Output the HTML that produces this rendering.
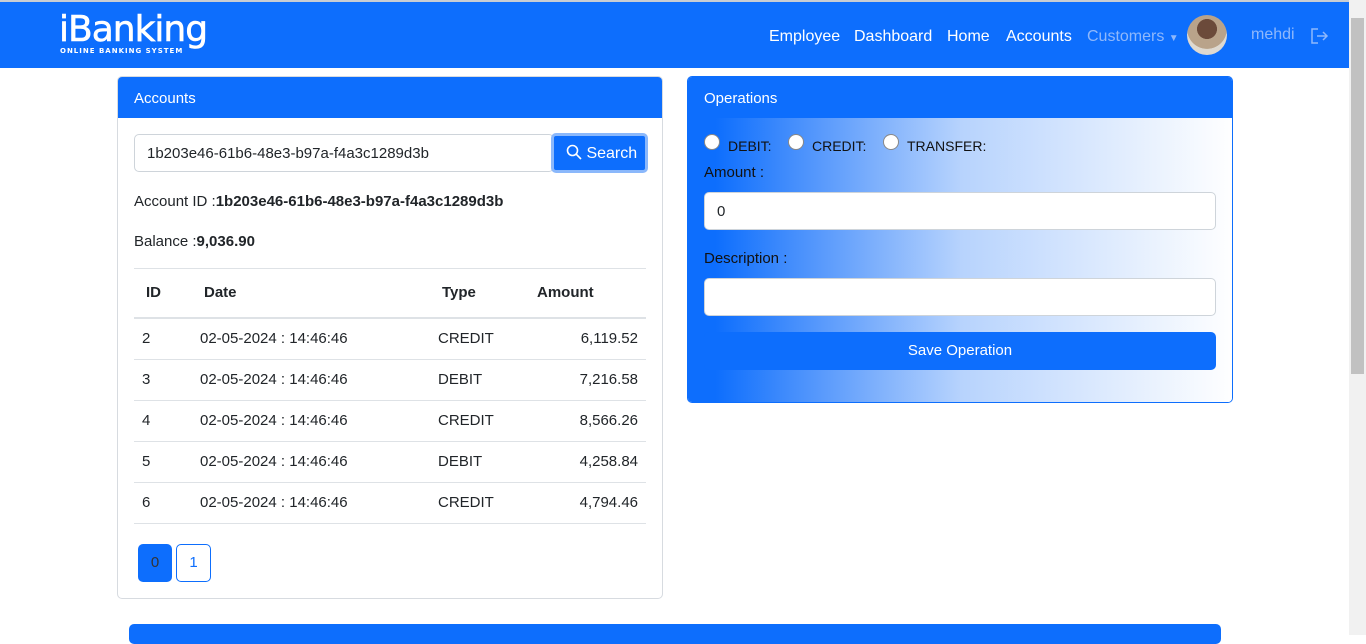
<!DOCTYPE html>
<html><head><style>
*{box-sizing:border-box;margin:0;padding:0}
body{width:1366px;height:635px;overflow:hidden;font-family:"Liberation Sans",sans-serif;font-size:15px;color:#212529;background:#fff;position:relative}
.top{position:absolute;left:0;top:0;width:1349px;height:2px;background:#c8cdd3}
nav{position:absolute;left:0;top:2px;width:1349px;height:66px;background:#0d6efd}
.logo{position:absolute;left:59px;top:10px;color:#fff;font-size:36px;font-family:"DejaVu Sans",sans-serif;letter-spacing:-1px;line-height:36px;-webkit-text-stroke:0.6px #fff}
.logo small{position:absolute;left:1px;top:35px;font-size:7px;font-weight:bold;letter-spacing:1px;white-space:nowrap;line-height:9px;-webkit-text-stroke:0}
.nl{position:absolute;top:26px;color:#fff;font-size:16px}
.sb{position:absolute;right:0;top:0;width:17px;height:635px;background:#f1f1f1}
.sb div{position:absolute;left:2px;top:18px;width:13px;height:356px;background:#c1c1c1}
.card{position:absolute;border:1px solid #d7dbe0;border-radius:5px;overflow:hidden}
.ch{background:#0d6efd;color:#fff;height:41px;padding:13px 16px 0;font-size:15px}
input.f{position:absolute;border:1px solid #ced4da;border-radius:5px;background:#fff;height:38px;padding:0 12px;font-size:15px;font-family:inherit;color:#212529}
table{position:absolute;left:16px;top:191px;width:512px;border-collapse:collapse}
td,th{height:41px;text-align:left;padding:0 8px;border-bottom:1px solid #dee2e6;font-size:15px}
th{font-weight:bold;border-bottom:2px solid #dee2e6;height:50px;padding-left:12px}
td.r{text-align:right}
.rd{position:absolute;top:134px;width:16px;height:16px;border-radius:50%;background:#fff;border:1px solid #888}
.rl{position:absolute;top:138px;color:#111;font-size:14px}
</style></head><body>
<div class="top"></div>
<nav>
<div class="logo">iBanking<small>ONLINE BANKING SYSTEM</small></div>
<span class="nl" style="left:769px">Employee</span>
<span class="nl" style="left:854px">Dashboard</span>
<span class="nl" style="left:947px">Home</span>
<span class="nl" style="left:1006px">Accounts</span>
<span class="nl" style="left:1087px;color:#8fb8fb">Customers <span style="font-size:10px">▼</span></span>
<div style="position:absolute;left:1187px;top:13px;width:40px;height:40px;border-radius:50%;background:radial-gradient(circle at 50% 35%,#6b4a3a 0 30%,#b9a38a 31% 60%,#ded9d0 61%)"></div>
<span class="nl" style="left:1251px;top:24px;color:#8fb8fb">mehdi</span>
<svg style="position:absolute;left:1311px;top:26px" width="18" height="16" viewBox="0 0 18 16" fill="none" stroke="#8fb8fb" stroke-width="1.5"><path d="M7 1H1v14h6M6 8h10M12 4l4 4-4 4"/></svg>
</nav>
<div class="sb"><div></div></div>

<div class="card" style="left:117px;top:76px;width:546px;height:523px">
<div class="ch">Accounts</div>
<input class="f" style="left:16px;top:57px;width:420px" value="1b203e46-61b6-48e3-b97a-f4a3c1289d3b">
<div style="position:absolute;left:433px;top:56px;width:97px;height:40px;background:#0d6efd;border:3px solid #8bb8fb;border-radius:5px;color:#fff;padding:8px 0 0 12px;font-size:16px">
<svg width="16" height="16" viewBox="0 0 16 16" style="vertical-align:-2px" fill="none" stroke="#fff" stroke-width="1.6"><circle cx="6.5" cy="6.5" r="5"/><path d="M10.2 10.2L15 15"/></svg> Search</div>
<div style="position:absolute;left:16px;top:116px">Account ID :<b>1b203e46-61b6-48e3-b97a-f4a3c1289d3b</b></div>
<div style="position:absolute;left:16px;top:156px">Balance :<b>9,036.90</b></div>
<div style="position:absolute;left:16px;top:191px;width:512px;border-top:1px solid #dee2e6"></div>
<table>
<tr><th style="width:58px">ID</th><th style="width:238px">Date</th><th style="width:95px">Type</th><th>Amount</th></tr>
<tr><td>2</td><td>02-05-2024 : 14:46:46</td><td>CREDIT</td><td class="r">6,119.52</td></tr>
<tr><td>3</td><td>02-05-2024 : 14:46:46</td><td>DEBIT</td><td class="r">7,216.58</td></tr>
<tr><td>4</td><td>02-05-2024 : 14:46:46</td><td>CREDIT</td><td class="r">8,566.26</td></tr>
<tr><td>5</td><td>02-05-2024 : 14:46:46</td><td>DEBIT</td><td class="r">4,258.84</td></tr>
<tr><td>6</td><td>02-05-2024 : 14:46:46</td><td>CREDIT</td><td class="r">4,794.46</td></tr>
</table>
<div style="position:absolute;left:20px;top:467px;width:34px;height:38px;background:#0d6efd;border-radius:5px;text-align:center;line-height:38px;color:#333">0</div>
<div style="position:absolute;left:58px;top:467px;width:35px;height:38px;border:1px solid #0d6efd;border-radius:5px;text-align:center;line-height:36px;color:#0d6efd">1</div>
</div>

<div class="card" style="left:687px;top:76px;width:546px;height:327px;border-color:#0d6efd">
<div class="ch">Operations</div>
<div style="position:absolute;left:0;top:41px;width:546px;height:286px;background:linear-gradient(90deg,#0d6efd 0%,#0d6efd 5%,#5b9bfc 25%,#b7d3fd 50%,#fff 100%)"></div>
</div>
<div class="rd" style="left:704px"></div><span class="rl" style="left:728px">DEBIT:</span>
<div class="rd" style="left:788px"></div><span class="rl" style="left:812px">CREDIT:</span>
<div class="rd" style="left:883px"></div><span class="rl" style="left:907px">TRANSFER:</span>
<div style="position:absolute;left:704px;top:164px;color:#111">Amount :</div>
<input class="f" style="left:704px;top:192px;width:512px" value="0">
<div style="position:absolute;left:704px;top:250px;color:#111">Description :</div>
<input class="f" style="left:704px;top:278px;width:512px">
<div style="position:absolute;left:704px;top:332px;width:512px;height:38px;background:#0d6efd;border-radius:5px;color:#fff;text-align:center;line-height:38px">Save Operation</div>

<div style="position:absolute;left:129px;top:624px;width:1092px;height:20px;background:#0d6efd;border-radius:5px"></div>
</body></html>
